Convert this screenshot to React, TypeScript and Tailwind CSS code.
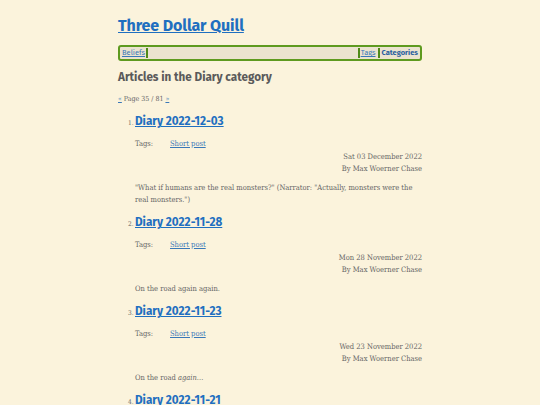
const posts = [
  {
    n: 1,
    title: "Diary 2022-12-03",
    date: "Sat 03 December 2022",
    body: (
      <>
        "What if humans are the real monsters?" (Narrator: "Actually, monsters were the real
        monsters.")
      </>
    ),
  },
  {
    n: 2,
    title: "Diary 2022-11-28",
    date: "Mon 28 November 2022",
    body: <>On the road again again.</>,
  },
  {
    n: 3,
    title: "Diary 2022-11-23",
    date: "Wed 23 November 2022",
    body: (
      <>
        On the road <em>again</em>...
      </>
    ),
  },
  {
    n: 4,
    title: "Diary 2022-11-21",
    date: "Mon 21 November 2022",
    body: <>On the road.</>,
  },
];

const sans = "font-['Fira_Sans','Open_Sans',sans-serif]";
const serif = "font-['DejaVu_Serif_Condensed','DejaVu_Serif',serif]";

export default function App() {
  return (
    <div className="h-[405px] overflow-hidden bg-[#fbf3dc] text-[#555]">
      <div className="mx-auto w-[304px] pt-[15px]">
        <h1 className={`${sans} text-[16px] font-bold leading-[22px] tracking-[-0.1px]`}>
          <a href="#" className="text-[#1f6fc0] underline">
            Three Dollar Quill
          </a>
        </h1>

        <nav
          className={`${sans} mt-[8px] flex h-[16px] items-center rounded-[3px] border-2 border-[#5e9a1f] bg-[#ebe3cf] px-[2px] text-[7.5px] leading-none`}
        >
          <a href="#" className="text-[#3a78b8] underline">
            Beliefs
          </a>
          <span className="ml-[1px] h-[10px] w-[2px] bg-[#4f8a18]" />
          <span className="flex-1" />
          <span className="mr-[1px] h-[10px] w-[2px] bg-[#4f8a18]" />
          <a href="#" className="text-[#3a78b8] underline">
            Tags
          </a>
          <span className="mx-[2px] h-[10px] w-[2px] bg-[#4f8a18]" />
          <a href="#" className="font-bold text-[#2a5f9e]">
            Categories
          </a>
        </nav>

        <h2 className={`${sans} mt-[7px] text-[11.7px] font-bold leading-[18px] text-[#5a5a5a]`}>
          Articles in the Diary category
        </h2>

        <p className={`${serif} mt-[8px] text-[7px] leading-[10px] text-[#666]`}>
          <a href="#" className="text-[#3a78b8] underline">
            «
          </a>{" "}
          Page 35 / 81{" "}
          <a href="#" className="text-[#3a78b8] underline">
            »
          </a>
        </p>

        <ol className="mt-[8px]">
          {posts.map((p) => (
            <li key={p.n} className="pl-[10px]">
              <div className="flex items-baseline">
                <span className={`${serif} w-[7px] text-[6.5px] text-[#666]`}>{p.n}.</span>
                <a
                  href="#"
                  className={`${sans} text-[11.7px] font-bold leading-[18px] text-[#1f6fc0] underline`}
                >
                  {p.title}
                </a>
              </div>
              <div className={`${serif} ml-[7px] text-[7.5px] leading-[12px] text-[#666]`}>
                <div className="mt-[8px] flex">
                  <span className="w-[35px]">Tags:</span>
                  <a href="#" className="text-[#3a78b8] underline">
                    Short post
                  </a>
                </div>
                <div className="mt-[1px] text-right">{p.date}</div>
                <div className="text-right">By Max Woerner Chase</div>
                <p className="mt-[7px] mb-[7px] leading-[12px]">{p.body}</p>
              </div>
            </li>
          ))}
        </ol>
      </div>
    </div>
  );
}
